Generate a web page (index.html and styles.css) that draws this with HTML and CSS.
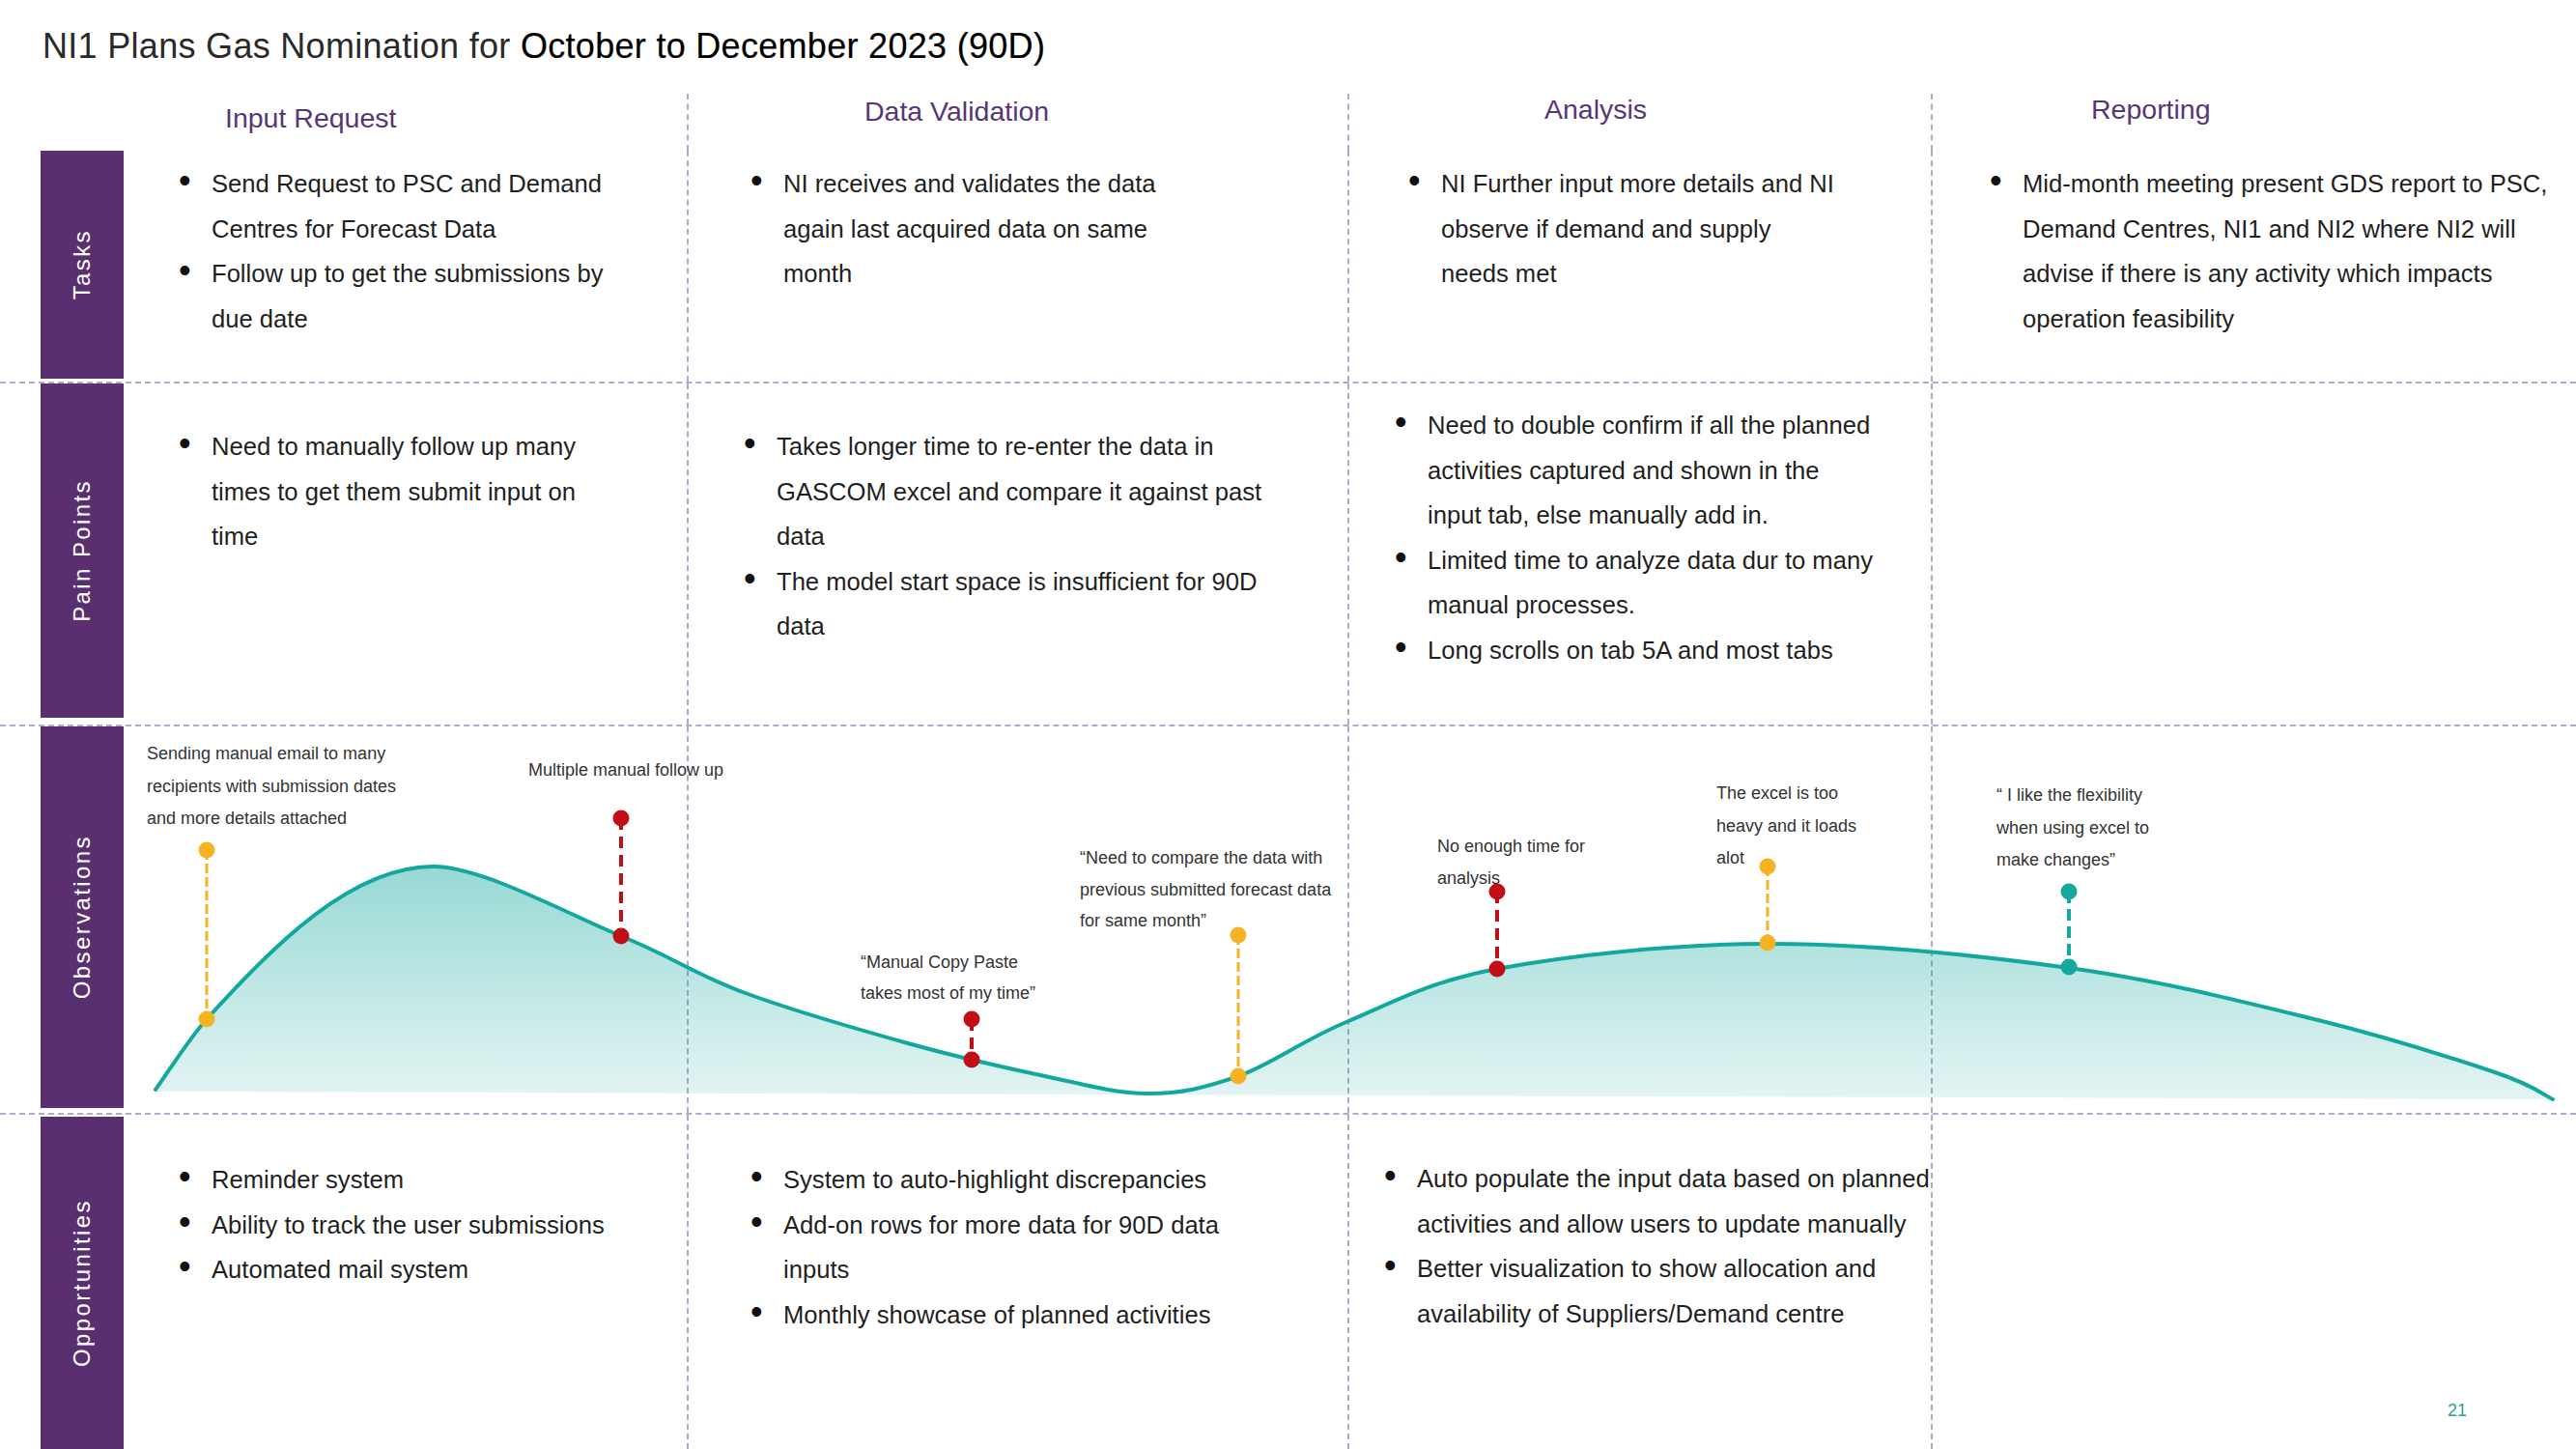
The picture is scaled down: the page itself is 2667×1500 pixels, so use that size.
FILE: index.html
```html
<!DOCTYPE html>
<html lang="en">
<head>
<meta charset="utf-8">
<title>NI1 Plans Gas Nomination</title>
<link rel="stylesheet" href="styles.css">
</head>
<body>
<main class="page">
  <h1 class="title">NI1 Plans Gas Nomination for <span class="title-strong">October to December 2023 (90D)</span></h1>

  <section class="board">
    <div class="row row-head">
      <div class="gut"></div>
      <div class="side"></div>
      <div class="cell c1"><h2 class="stage">Input Request</h2></div>
      <div class="cell c2"><h2 class="stage">Data Validation</h2></div>
      <div class="cell c3"><h2 class="stage">Analysis</h2></div>
      <div class="cell c4"><h2 class="stage">Reporting</h2></div>
    </div>

    <div class="row row-tasks">
      <div class="gut"></div>
      <div class="side"><div class="bar"><span class="bar-label">Tasks</span></div></div>
      <div class="cell c1">
        <ul class="list">
          <li>Send Request to PSC and Demand<br>Centres for Forecast Data</li>
          <li>Follow up to get the submissions by<br>due date</li>
        </ul>
      </div>
      <div class="cell c2">
        <ul class="list">
          <li>NI receives and validates the data<br>again last acquired data on same<br>month</li>
        </ul>
      </div>
      <div class="cell c3">
        <ul class="list">
          <li>NI Further input more details and NI<br>observe if demand and supply<br>needs met</li>
        </ul>
      </div>
      <div class="cell c4">
        <ul class="list">
          <li>Mid-month meeting present GDS report to PSC,<br>Demand Centres, NI1 and NI2 where NI2 will<br>advise if there is any activity which impacts<br>operation feasibility</li>
        </ul>
      </div>
    </div>

    <div class="row row-ruled row-pain">
      <div class="gut"></div>
      <div class="side"><div class="bar"><span class="bar-label">Pain Points</span></div></div>
      <div class="cell c1">
        <ul class="list">
          <li>Need to manually follow up many<br>times to get them submit input on<br>time</li>
        </ul>
      </div>
      <div class="cell c2">
        <ul class="list">
          <li>Takes longer time to re-enter the data in<br>GASCOM excel and compare it against past<br>data</li>
          <li>The model start space is insufficient for 90D<br>data</li>
        </ul>
      </div>
      <div class="cell c3">
        <ul class="list">
          <li>Need to double confirm if all the planned<br>activities captured and shown in the<br>input tab, else manually add in.</li>
          <li>Limited time to analyze data dur to many<br>manual processes.</li>
          <li>Long scrolls on tab 5A and most tabs</li>
        </ul>
      </div>
      <div class="cell c4"></div>
    </div>

    <div class="row row-ruled row-obs">
      <div class="gut"></div>
      <div class="side"><div class="bar"><span class="bar-label">Observations</span></div></div>
      <div class="cell c1"></div>
      <div class="cell c2"></div>
      <div class="cell c3"></div>
      <div class="cell c4"></div>
      <svg class="chart" viewBox="128 752 2539 400" width="2539" height="400">
        <defs>
          <linearGradient id="hill" x1="0" y1="895" x2="0" y2="1136" gradientUnits="userSpaceOnUse">
            <stop offset="0" stop-color="#13a89e" stop-opacity="0.44"/>
            <stop offset="1" stop-color="#13a89e" stop-opacity="0.12"/>
          </linearGradient>
        </defs>
        <path class="hill-fill" d="M161,1128 C176,1107 196,1075 214,1055 C284,978 364,897 449,897 C499,897 589.7,947.3 643,969 C696.3,990.7 719.5,1008.5 769,1027 C818.5,1045.5 888.7,1065.7 940,1080 C991.3,1094.3 1035.7,1104.3 1077,1113 C1118.3,1121.7 1153.8,1131.8 1188,1132 C1222.2,1132.2 1247.7,1126.3 1282,1114 C1316.3,1101.7 1349.3,1076.5 1394,1058 C1438.7,1039.5 1477.3,1016.5 1550,1003 C1622.7,989.5 1731.3,977.2 1830,977 C1928.7,976.8 2047.7,989 2142,1002 C2236.3,1015 2322.5,1037 2396,1055 C2469.5,1073 2541.8,1096.2 2583,1110 C2624.2,1123.8 2633,1133.3 2643,1138 L161,1130 Z"/>
        <path class="hill-line" d="M161,1128 C176,1107 196,1075 214,1055 C284,978 364,897 449,897 C499,897 589.7,947.3 643,969 C696.3,990.7 719.5,1008.5 769,1027 C818.5,1045.5 888.7,1065.7 940,1080 C991.3,1094.3 1035.7,1104.3 1077,1113 C1118.3,1121.7 1153.8,1131.8 1188,1132 C1222.2,1132.2 1247.7,1126.3 1282,1114 C1316.3,1101.7 1349.3,1076.5 1394,1058 C1438.7,1039.5 1477.3,1016.5 1550,1003 C1622.7,989.5 1731.3,977.2 1830,977 C1928.7,976.8 2047.7,989 2142,1002 C2236.3,1015 2322.5,1037 2396,1055 C2469.5,1073 2541.8,1096.2 2583,1110 C2624.2,1123.8 2633,1133.3 2643,1138"/>

        <line class="link link-amber" x1="214" y1="880" x2="214" y2="1055"/>
        <line class="link link-red" x1="643" y1="847" x2="643" y2="969"/>
        <line class="link link-red" x1="1006" y1="1055" x2="1006" y2="1097"/>
        <line class="link link-amber" x1="1282" y1="968" x2="1282" y2="1114"/>
        <line class="link link-red" x1="1550" y1="923" x2="1550" y2="1003"/>
        <line class="link link-amber" x1="1830" y1="897" x2="1830" y2="976"/>
        <line class="link link-teal" x1="2142" y1="923" x2="2142" y2="1001"/>

        <circle class="dot dot-amber" cx="214" cy="880" r="8.5"/>
        <circle class="dot dot-amber" cx="214" cy="1055" r="8.5"/>
        <circle class="dot dot-red" cx="643" cy="847" r="8.5"/>
        <circle class="dot dot-red" cx="643" cy="969" r="8.5"/>
        <circle class="dot dot-red" cx="1006" cy="1055" r="8.5"/>
        <circle class="dot dot-red" cx="1006" cy="1097" r="8.5"/>
        <circle class="dot dot-amber" cx="1282" cy="968" r="8.5"/>
        <circle class="dot dot-amber" cx="1282" cy="1114" r="8.5"/>
        <circle class="dot dot-red" cx="1550" cy="923" r="8.5"/>
        <circle class="dot dot-red" cx="1550" cy="1003" r="8.5"/>
        <circle class="dot dot-amber" cx="1830" cy="897" r="8.5"/>
        <circle class="dot dot-amber" cx="1830" cy="976" r="8.5"/>
        <circle class="dot dot-teal" cx="2142" cy="923" r="8.5"/>
        <circle class="dot dot-teal" cx="2142" cy="1001" r="8.5"/>

        <text class="note"><tspan x="152" y="786">Sending manual email to many</tspan><tspan x="152" y="820">recipients with submission dates</tspan><tspan x="152" y="853">and more details attached</tspan></text>
        <text class="note"><tspan x="547" y="803">Multiple manual follow up</tspan></text>
        <text class="note"><tspan x="1118" y="894">“Need to compare the data with</tspan><tspan x="1118" y="927">previous submitted forecast data</tspan><tspan x="1118" y="959">for same month”</tspan></text>
        <text class="note"><tspan x="891" y="1002">“Manual Copy Paste</tspan><tspan x="891" y="1034">takes most of my time”</tspan></text>
        <text class="note"><tspan x="1488" y="882">No enough time for</tspan><tspan x="1488" y="915">analysis</tspan></text>
        <text class="note"><tspan x="1777" y="827">The excel is too</tspan><tspan x="1777" y="861">heavy and it loads</tspan><tspan x="1777" y="894">alot</tspan></text>
        <text class="note"><tspan x="2067" y="829">“ I like the flexibility</tspan><tspan x="2067" y="863">when using excel to</tspan><tspan x="2067" y="896">make changes”</tspan></text>
      </svg>
    </div>

    <div class="row row-ruled row-opp">
      <div class="gut"></div>
      <div class="side"><div class="bar"><span class="bar-label">Opportunities</span></div></div>
      <div class="cell c1">
        <ul class="list">
          <li>Reminder system</li>
          <li>Ability to track the user submissions</li>
          <li>Automated mail system</li>
        </ul>
      </div>
      <div class="cell c2">
        <ul class="list">
          <li>System to auto-highlight discrepancies</li>
          <li>Add-on rows for more data for 90D data<br>inputs</li>
          <li>Monthly showcase of planned activities</li>
        </ul>
      </div>
      <div class="cell c3">
        <ul class="list">
          <li>Auto populate the input data based on planned<br>activities and allow users to update manually</li>
          <li>Better visualization to show allocation and<br>availability of Suppliers/Demand centre</li>
        </ul>
      </div>
      <div class="cell c4">
        <span class="pagenum">21</span>
      </div>
    </div>
  </section>
</main>
</body>
</html>
```

FILE: styles.css
```css
* {
  box-sizing: border-box;
}

html,
body {
  margin: 0;
  padding: 0;
  background: #ffffff;
}

body {
  font-family: "Liberation Sans", Arial, sans-serif;
  color: #1f1f1f;
}

.page {
  width: 2667px;
  height: 1500px;
  overflow: hidden;
  padding-top: 27px;
}

.title {
  margin: 0 0 28px;
  padding-left: 44px;
  font-size: 36px;
  line-height: 42px;
  font-weight: 400;
  letter-spacing: 0.3px;
  color: #2a2a2a;
  white-space: nowrap;
}

.title-strong {
  color: #000000;
  -webkit-text-stroke: 0.2px #000000;
}

/* ---------- board grid ---------- */

.row {
  display: grid;
  grid-template-columns: 42px 86px 583px 684px 604px 668px;
}

.row > * {
  grid-row: 1;
}

.row-ruled {
  border-top: 2px dashed #b5a7c7;
}

.row-head { height: 59px; }
.row-tasks { height: 239px; }
.row-pain { height: 355px; }
.row-obs { height: 402px; }
.row-opp { height: 348px; }

.gut { grid-column: 1; }
.side {
  grid-column: 2;
  display: flex;
  flex-direction: column;
}
.c1 { grid-column: 3; }
.c2 { grid-column: 4; }
.c3 { grid-column: 5; }
.c4 { grid-column: 6; }

.c2,
.c3,
.c4 {
  border-left: 2px dashed #b5a7c7;
}

/* ---------- side bars ---------- */

.bar {
  flex: 1;
  background: #5a2f6f;
  display: flex;
  align-items: center;
  justify-content: center;
}

.row-tasks .bar { margin-bottom: 3px; }
.row-pain .bar { margin-bottom: 7px; }
.row-obs .bar { margin-bottom: 5px; }
.row-opp .bar { margin-top: 2px; }

.bar-label {
  writing-mode: vertical-rl;
  transform: rotate(180deg);
  color: #ffffff;
  font-size: 24px;
  line-height: 1;
  letter-spacing: 2.4px;
  white-space: nowrap;
}

/* ---------- stage headers ---------- */

.stage {
  margin: 0;
  font-size: 28.5px;
  line-height: 30px;
  font-weight: 400;
  color: #573677;
  white-space: nowrap;
}

.row-head .c1 { padding: 10px 0 0 105px; }
.row-head .c2 { padding: 3px 0 0 182px; }
.row-head .c3 { padding: 1px 0 0 202px; }
.row-head .c4 { padding: 1px 0 0 164px; }

/* ---------- bullet lists ---------- */

.list {
  list-style: none;
  margin: 0;
  padding: 0;
  font-size: 25.6px;
  line-height: 46.5px;
  color: #1f1f1f;
  white-space: nowrap;
}

.list li {
  padding-left: 32px;
  text-indent: -32px;
}

.list li::before {
  content: "\2022";
  display: inline-block;
  width: 32px;
  font-size: 36px;
  line-height: 10px;
  text-indent: -2px;
  vertical-align: 0;
  color: #111111;
}

.row-tasks .cell { padding-top: 11px; }
.row-tasks .c1 { padding-left: 59px; }
.row-tasks .c2 { padding-left: 66px; }
.row-tasks .c3 { padding-left: 63px; }
.row-tasks .c4 { padding-left: 61px; }

.row-pain .c1 { padding: 42px 0 0 59px; }
.row-pain .c2 { padding: 42px 0 0 59px; }
.row-pain .c3 { padding: 20px 0 0 49px; }

.row-opp .c1 { padding: 44px 0 0 59px; }
.row-opp .c2 { padding: 44px 0 0 66px; }
.row-opp .c3 { padding: 43px 0 0 38px; }

.row-opp .c4 {
  display: flex;
  flex-direction: column;
}

.pagenum {
  margin-top: auto;
  align-self: flex-end;
  margin-right: 113px;
  margin-bottom: 31px;
  font-size: 18px;
  line-height: 18px;
  color: #2aa39b;
}

/* ---------- observation chart ---------- */

.chart {
  grid-column: 3 / 7;
  display: block;
  width: 2539px;
  height: 400px;
  overflow: visible;
}

.hill-fill {
  fill: url(#hill);
  stroke: none;
}

.hill-line {
  fill: none;
  stroke: #13a89e;
  stroke-width: 4;
  stroke-linecap: round;
  stroke-linejoin: round;
}

.link {
  fill: none;
}

.link-red {
  stroke: #c20e17;
  stroke-width: 4;
  stroke-dasharray: 12 7;
}

.link-amber {
  stroke: #f5b324;
  stroke-width: 3;
  stroke-dasharray: 10 4;
}

.link-teal {
  stroke: #16a89d;
  stroke-width: 4;
  stroke-dasharray: 12 6;
}

.dot-red { fill: #c20e17; }
.dot-amber { fill: #f5b324; }
.dot-teal { fill: #16a89d; }

.note {
  font-family: "Liberation Sans", Arial, sans-serif;
  font-size: 18px;
  fill: #333333;
}
```
